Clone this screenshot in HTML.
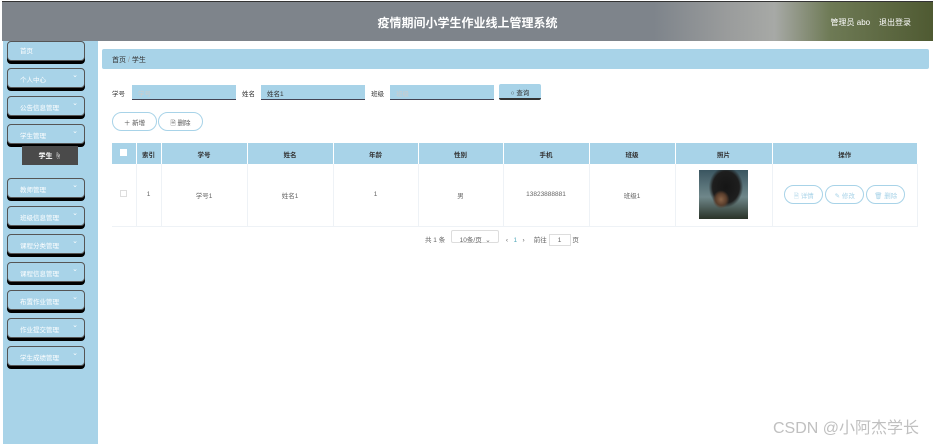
<!DOCTYPE html>
<html><head><meta charset="utf-8"><style>
*{box-sizing:border-box;margin:0;padding:0}
body{width:933px;height:444px;overflow:hidden;background:#fff;font-family:"Liberation Sans","Noto Sans CJK SC",sans-serif;font-size:7px;color:#333;position:relative}
.hdr{position:absolute;left:2px;top:1px;width:931px;height:40px;background:linear-gradient(90deg,#7e848b 0%,#7e848b 70%,#9a9c9c 78%,#a7a9a6 83%,#6e7a55 89%,#4f5a32 100%);border-top:1px solid #333}
.hdr .t{position:absolute;left:0;width:100%;text-align:center;top:12px;color:#fff;font-size:12px;font-weight:bold}
.hdr .u{position:absolute;right:22px;top:15px;color:#fff;font-size:8px}
.side{position:absolute;left:3px;top:41px;width:95px;height:403px;background:#a8d3e8}
.mi{position:absolute;left:7px;width:78px;height:20px;border:1px solid #555;border-radius:4px;background:#a8d3e8;box-shadow:0 3px 0 #000;color:#fff;font-size:6.5px;padding:5px 0 0 12px}
.mi:after{content:"⌄";position:absolute;right:6px;top:2px;font-size:7px}
.mi.n:after{content:""}
.sub{position:absolute;left:22px;top:146px;width:56px;height:19px;background:#4a4a4a;color:#fff;font-size:7px;text-align:center;padding-top:5px;font-weight:bold}
.bc{position:absolute;left:102px;top:49px;width:827px;height:20px;background:#a8d3e8;border-radius:2px;padding:6px 10px;font-size:7px}
.lbl{position:absolute;top:88px;font-size:6.5px}
.inp{position:absolute;top:85px;height:15px;background:#a8d3e8;border-bottom:1px solid #445;font-size:6.5px;padding:3px 6px;color:#333}
.ob{position:absolute;top:112px;height:19px;border:1.5px solid #a8d3e8;border-radius:10px;font-size:6.5px;text-align:center;padding-top:4px;color:#555}
table{position:absolute;left:112px;top:143px;width:806px;border-collapse:collapse;font-size:6.5px}
th{background:#a8d3e8;height:21px;border-right:1px solid #fff;font-weight:bold;color:#333}
td{height:62px;text-align:center;vertical-align:middle;border-right:1px solid #eef2f6;border-bottom:1px solid #eef2f6;color:#666}
.ab{display:inline-block;width:39px;height:19px;border:1.5px solid #a8d3e8;border-radius:10px;color:#a8d3e8;padding-top:4px;margin:0 1px}
.pg{position:absolute;top:230px;left:425px;font-size:6.5px;color:#666}
</style></head><body>
<div class="hdr"><div class="t">疫情期间小学生作业线上管理系统</div><div class="u">管理员 abo &nbsp;&nbsp; 退出登录</div></div>
<div class="side"></div>
<div class="mi n" style="top:41px;padding-top:3px">首页</div>
<div class="mi" style="top:68px">个人中心</div>
<div class="mi" style="top:96px">公告信息管理</div>
<div class="mi" style="top:124px">学生管理</div>
<div class="sub">学生 ☝</div>
<div class="mi" style="top:178px">教师管理</div>
<div class="mi" style="top:206px">班级信息管理</div>
<div class="mi" style="top:234px">课程分类管理</div>
<div class="mi" style="top:262px">课程信息管理</div>
<div class="mi" style="top:290px">布置作业管理</div>
<div class="mi" style="top:318px">作业提交管理</div>
<div class="mi" style="top:346px">学生成绩管理</div>
<div class="bc">首页 <span style="color:#999">/</span> 学生</div>
<div class="lbl" style="left:112px">学号</div><div class="inp" style="left:132px;width:104px;color:#ccc">学号</div>
<div class="lbl" style="left:242px">姓名</div><div class="inp" style="left:261px;width:104px">姓名1</div>
<div class="lbl" style="left:371px">班级</div><div class="inp" style="left:390px;width:104px;color:#ccc">班级</div>
<div class="inp" style="left:499px;width:42px;top:84px;height:16px;text-align:center;border-bottom:2px solid #333;border-radius:2px">○ 查询</div>
<div class="ob" style="left:112px;width:45px">＋ 新增</div>
<div class="ob" style="left:158px;width:45px">🗎 删除</div>
<table><tr><th style="width:24px"><span style="display:inline-block;width:7px;height:7px;background:#fff"></span></th><th style="width:25px">索引</th><th style="width:86px">学号</th><th style="width:86px">姓名</th><th style="width:85px">年龄</th><th style="width:85px">性别</th><th style="width:86px">手机</th><th style="width:86px">班级</th><th style="width:97px">照片</th><th>操作</th></tr>
<tr><td><span style="display:inline-block;width:7px;height:7px;border:1px solid #ddd"></span></td><td>1</td><td>学号1</td><td>姓名1</td><td>1</td><td>男</td><td>13823888881</td><td>班级1</td><td><div style="width:49px;height:49px;margin:auto;background:radial-gradient(ellipse at 45% 60%,#8a6448 0,#5a3e2c 14%,transparent 22%),radial-gradient(ellipse at 55% 35%,#151515 0,#1e1e1e 35%,transparent 45%),linear-gradient(#3a5560,#6f878a 55%,#2a3328)"></div></td><td><span class="ab">🗎 详情</span><span class="ab">✎ 修改</span><span class="ab">🗑 删除</span></td></tr></table>
<div class="pg">共 1 条 &nbsp;&nbsp;<span style="display:inline-block;border:1px solid #ddd;border-radius:2px;width:48px;height:13px;padding:3px 0 0 8px">10条/页 &nbsp;⌄</span>&nbsp;&nbsp;&nbsp; ‹ &nbsp;&nbsp;<span style="color:#5ab">1</span>&nbsp;&nbsp; › &nbsp;&nbsp;&nbsp; 前往 <span style="display:inline-block;border:1px solid #ddd;width:22px;height:12px;text-align:center;padding-top:2px">1</span> 页</div>
<div style="position:absolute;right:14px;top:414px;font-size:16px;color:#c0c0c0">CSDN @小阿杰学长</div>
</body></html>
